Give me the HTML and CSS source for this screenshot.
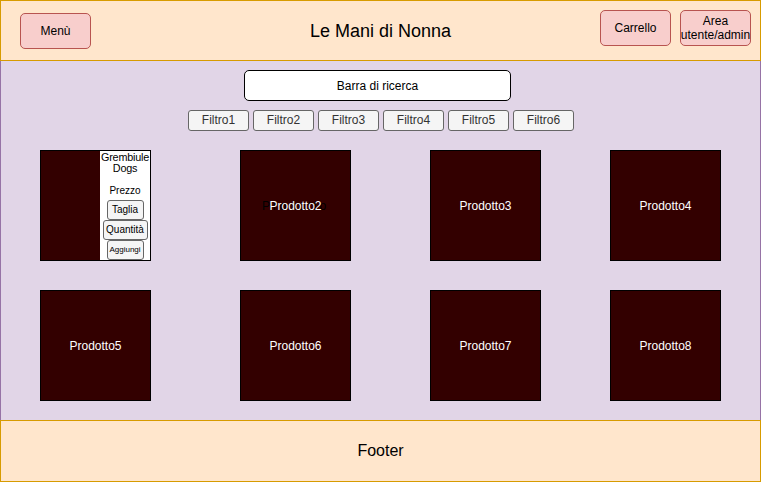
FILE: index.html
```html
<!DOCTYPE html>
<html lang="it">
<head>
<meta charset="utf-8">
<title>Le Mani di Nonna</title>
<link rel="stylesheet" href="styles.css">
</head>
<body>
<div class="page">
  <header class="header">
    <div class="header-left">
      <button class="pill menu-btn">Menù</button>
    </div>
    <h1 class="title">Le Mani di Nonna</h1>
    <div class="header-right">
      <button class="pill">Carrello</button>
      <button class="pill pill-two">Area<br>utente/admin</button>
    </div>
  </header>

  <main class="main">
    <div class="search">Barra di ricerca</div>
    <div class="filters">
      <button class="filter">Filtro1</button>
      <button class="filter">Filtro2</button>
      <button class="filter">Filtro3</button>
      <button class="filter">Filtro4</button>
      <button class="filter">Filtro5</button>
      <button class="filter">Filtro6</button>
    </div>

    <div class="products">
      <div class="product product-detail">
        <div class="detail-image"></div>
        <div class="detail-info">
          <div class="detail-name">Grembiule<br>Dogs</div>
          <div class="detail-price">Prezzo</div>
          <button class="mini mini-taglia">Taglia</button>
          <button class="mini mini-qty">Quantità</button>
          <button class="mini mini-add">Aggiungi</button>
        </div>
      </div>
      <div class="product product-stack">
        <span class="ghost">Prodotto</span>
        <span class="label">Prodotto2</span>
      </div>
      <div class="product"><span class="label">Prodotto3</span></div>
      <div class="product"><span class="label">Prodotto4</span></div>
      <div class="product"><span class="label">Prodotto5</span></div>
      <div class="product"><span class="label">Prodotto6</span></div>
      <div class="product"><span class="label">Prodotto7</span></div>
      <div class="product"><span class="label">Prodotto8</span></div>
    </div>
  </main>

  <footer class="footer">Footer</footer>
</div>
</body>
</html>
```

FILE: styles.css
```css
* { box-sizing: border-box; }

html, body {
  margin: 0;
  padding: 0;
  background: #ffffff;
}

body {
  font-family: "Liberation Sans", Arial, Helvetica, sans-serif;
  color: #000;
}

.page {
  width: 761px;
  height: 482px;
  display: flex;
  flex-direction: column;
}

button {
  font-family: inherit;
  margin: 0;
  padding: 0;
  cursor: pointer;
}

/* Header */
.header {
  height: 61px;
  background: #ffe6cc;
  border: 1px solid #d79b00;
  display: grid;
  grid-template-columns: 1fr auto 1fr;
}

.header-left {
  padding: 12px 0 0 19px;
}

.title {
  margin: 0;
  align-self: center;
  font-size: 18px;
  font-weight: normal;
  line-height: 22px;
  color: #000;
}

.header-right {
  justify-self: end;
  display: flex;
  gap: 9px;
  padding: 9px 9px 0 0;
}

.pill {
  width: 71px;
  height: 36px;
  background: #f8cecc;
  border: 1px solid #b85450;
  border-radius: 5px;
  font-size: 12px;
  line-height: 14px;
  color: #000;
  display: flex;
  align-items: center;
  justify-content: center;
  text-align: center;
}

.pill-two {
  line-height: 14px;
  white-space: nowrap;
}

/* Main */
.main {
  flex: 1;
  background: #e1d5e7;
  border-left: 1px solid #9673a6;
  border-right: 1px solid #9673a6;
  padding-top: 9px;
}

.search {
  margin-left: 243px;
  width: 267px;
  height: 31px;
  background: #ffffff;
  border: 1px solid #000;
  border-radius: 5px;
  font-size: 12px;
  display: flex;
  align-items: center;
  justify-content: center;
}

.filters {
  margin: 9px 0 0 187px;
  display: flex;
  gap: 4px;
}

.filter {
  width: 61px;
  height: 21px;
  background: #f5f5f5;
  border: 1px solid #666666;
  border-radius: 3px;
  color: #333333;
  font-size: 12px;
  line-height: 19px;
}

.products {
  margin-top: 19px;
  padding-left: 39px;
  display: grid;
  grid-template-columns: 200px 190px 180px 111px;
  grid-auto-rows: 111px;
  row-gap: 29px;
}

.product {
  width: 111px;
  height: 111px;
  background: #330000;
  border: 1px solid #000;
  display: flex;
  align-items: center;
  justify-content: center;
  color: #ffffff;
  font-size: 12px;
}

.product-stack {
  display: grid;
  place-items: center;
}

.product-stack > span {
  grid-area: 1 / 1;
}

.ghost {
  color: #000;
  letter-spacing: 2.7px;
}

.label {
  color: #ffffff;
}

/* Detail card */
.product-detail {
  display: flex;
  align-items: stretch;
  justify-content: flex-start;
  color: #000;
}

.detail-image {
  width: 59px;
  background: #330000;
}

.detail-info {
  flex: 1;
  background: #ffffff;
  display: flex;
  flex-direction: column;
  align-items: center;
  padding-top: 1px;
  overflow: visible;
}

.detail-name {
  font-size: 10.8px;
  line-height: 11px;
  text-align: center;
  white-space: nowrap;
  letter-spacing: -0.2px;
}

.detail-price {
  margin-top: 11px;
  font-size: 10px;
  line-height: 12px;
}

.mini {
  height: 20px;
  background: #f5f5f5;
  border: 1px solid #666666;
  border-radius: 3px;
  color: #000;
  font-size: 10px;
  line-height: 18px;
  white-space: nowrap;
  flex-shrink: 0;
}

.mini-taglia {
  margin-top: 3px;
  width: 37px;
}

.mini-qty {
  width: 45px;
}

.mini-add {
  width: 37px;
  font-size: 8px;
}

/* Footer */
.footer {
  height: 62px;
  background: #ffe6cc;
  border: 1px solid #d79b00;
  display: flex;
  align-items: center;
  justify-content: center;
  font-size: 16px;
  color: #000;
}
```
